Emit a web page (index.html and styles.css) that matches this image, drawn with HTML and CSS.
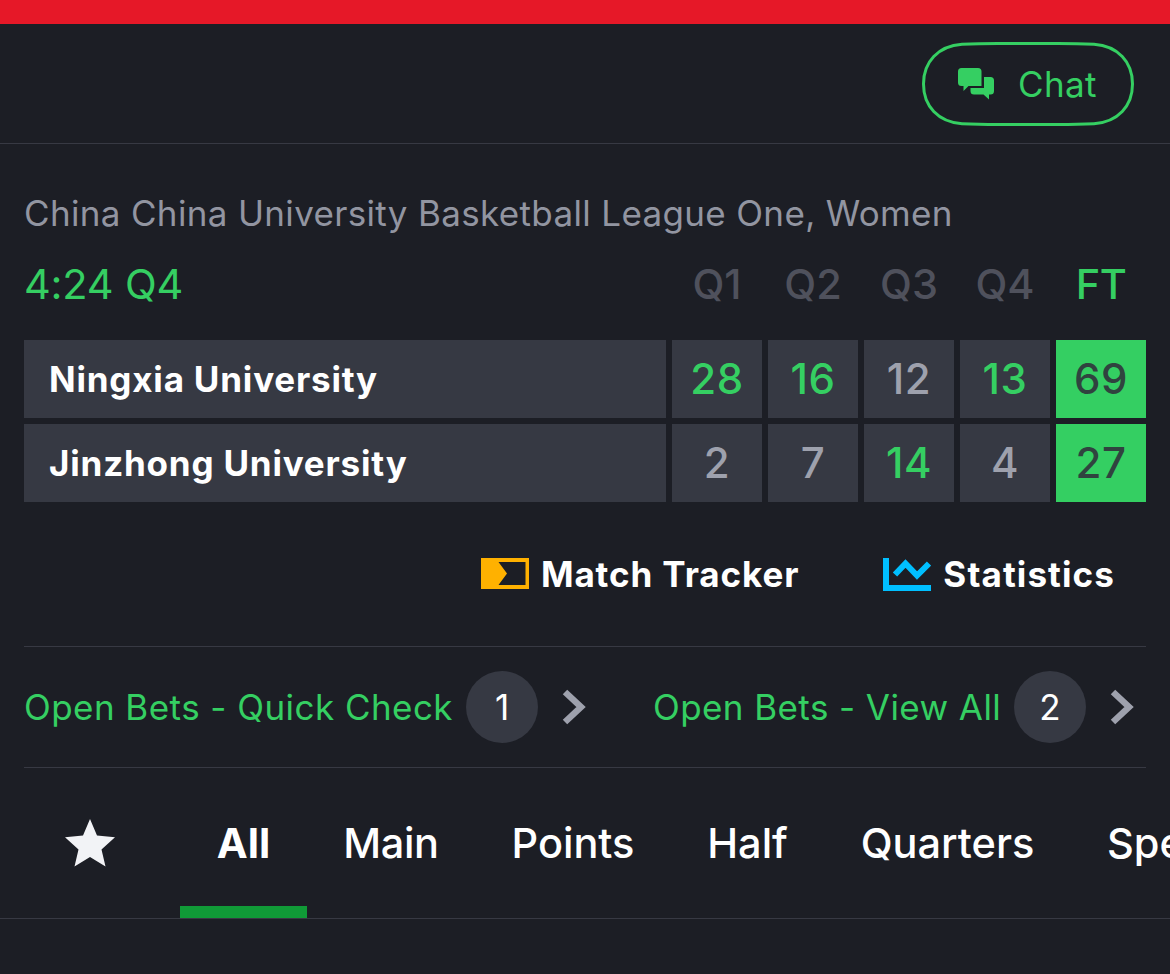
FILE: index.html
```html
<!DOCTYPE html>
<html lang="en">
<head>
<meta charset="utf-8">
<title>Match</title>
<link rel="stylesheet" href="styles.css">
</head>
<body>
<div class="alert-bar"></div>
<header class="header">
  <button class="chat">
    <svg class="chat-outline" viewBox="0 0 212 84"><path d="M1.500 42C1.500 20 16 4 40 2.300Q56 1.500 76 1.500H136Q156 1.500 172 2.300C196 4 210.500 20 210.500 42S196 80 172 81.700Q156 82.500 136 82.500H76Q56 82.500 40 81.700C16 80 1.500 64 1.500 42Z"/></svg>
    <svg class="chat-icon" viewBox="0 0 36 32"><path d="M3.500 0H20Q23.500 0 23.500 3.500V18H10.500L5.500 23V18H3.500Q0 18 0 14.500V3.500Q0 0 3.500 0Z"/><path d="M26 9H32.500Q36 9 36 12.500V23Q36 26.500 32.500 26.500H31V31.500L25.500 26.500H16Q12.500 26.500 12.500 23V20H26Z"/></svg>
    <span class="chat-label">Chat</span>
  </button>
</header>
<main>
  <section class="match">
    <div class="league"><span>China China University Basketball League One, Women</span></div>
    <div class="periods">
      <span class="clock">4:24 Q4</span>
      <span class="period">Q1</span><span class="period">Q2</span><span class="period">Q3</span><span class="period">Q4</span><span class="period total">FT</span>
    </div>
    <div class="board">
      <span class="team">Ningxia University</span>
      <span class="score won">28</span><span class="score won">16</span><span class="score">12</span><span class="score won">13</span><span class="score final">69</span>
      <span class="team second">Jinzhong University</span>
      <span class="score">2</span><span class="score">7</span><span class="score won">14</span><span class="score">4</span><span class="score final">27</span>
    </div>
    <div class="links">
      <a class="link tracker"><svg class="tracker-icon" viewBox="0 0 48 31"><path fill-rule="evenodd" d="M0 0H48V31H0ZM17.500 4L26 15.500L17.500 27H44.500V4Z"/></svg><span>Match Tracker</span></a>
      <a class="link stats"><svg class="stats-icon" viewBox="0 0 48 33"><path d="M3 0V30H48M12 16.500L22.500 5.500L34 17.500L46 5.500"/></svg><span>Statistics</span></a>
    </div>
  </section>
  <section class="bets">
    <a class="bet quick"><span class="bet-label">Open Bets - Quick Check</span><span class="count">1</span><svg class="chevron" viewBox="0 0 24 36"><path d="M3 3L19 18L3 33"/></svg></a>
    <a class="bet view"><span class="bet-label">Open Bets - View All</span><span class="count">2</span><svg class="chevron" viewBox="0 0 24 36"><path d="M3 3L19 18L3 33"/></svg></a>
  </section>
  <nav class="tabs">
    <a class="tab favourite"><svg class="star" viewBox="0 0 50 48"><path d="M25 0L32 16.500L50 18.200L36.500 30.500L40.500 47.500L25 38L9.500 47.500L13.500 30.500L0 18.200L18 16.500Z"/></svg></a>
    <a class="tab active">All</a>
    <a class="tab main-tab">Main</a>
    <a class="tab points">Points</a>
    <a class="tab half">Half</a>
    <a class="tab quarters">Quarters</a>
    <a class="tab specials">Specials</a>
  </nav>
</main>
</body>
</html>
```
FILE: styles.css
```css
* { box-sizing: border-box; }
body {
  margin: 0;
  height: 974px;
  overflow: hidden;
  background: #1c1e25;
  color: #fff;
  font-family: Inter, "Liberation Sans", sans-serif;
  font-size: 35px;
  white-space: nowrap;
}
svg { display: block; flex: none; }
.alert-bar { height: 24px; background: #e61828; }
.header {
  display: flex;
  justify-content: flex-end;
  height: 120px;
  padding: 18px 36px 0 0;
  border-bottom: 1px solid #373943;
}
.chat {
  position: relative;
  display: flex;
  align-items: center;
  width: 212px;
  height: 84px;
  padding: 0 0 0 36px;
  border: 0;
  background: none;
  color: #35cf62;
  font: inherit;
}
.chat-outline { position: absolute; inset: 0; fill: none; stroke: #35cf62; stroke-width: 3; }
.chat-icon { width: 36px; height: 32px; fill: #35cf62; }
.chat-label { margin-left: 24px; letter-spacing: .4px; }
.match { padding: 39px 24px 0; }
.league { height: 60px; line-height: 60px; color: #9295a1; letter-spacing: .34px; }
.periods, .board {
  display: grid;
  grid-template-columns: 642px repeat(5, 90px);
  gap: 6px;
  font-size: 41.500px;
}
.periods { height: 97px; line-height: 82px; }
.clock { color: #35cf62; letter-spacing: -.2px; }
.period { color: #4f515c; text-align: center; font-weight: 500; }
.period.total { color: #35cf62; letter-spacing: -.5px; }
.board { grid-auto-rows: 78px; line-height: 78px; }
.team { padding-left: 25px; background: #363943; font-size: 35px; font-weight: 700; letter-spacing: .8px; }
.score { background: #363943; color: #9ea1ad; font-size: 42px; text-align: center; font-weight: 500; letter-spacing: .6px; }
.score.won { color: #35cf62; }
.score.final { background: #34cf62; color: #30433f; }
.links {
  display: flex;
  justify-content: flex-end;
  gap: 84px;
  height: 144px;
  padding-right: 31px;
  font-weight: 700;
}
.link { display: flex; align-items: center; gap: 12px; }
.tracker { letter-spacing: .9px; }
.stats { letter-spacing: 1.1px; }
.tracker-icon { width: 48px; height: 31px; margin-top: -2px; fill: #ffb100; }
.stats-icon { width: 48px; height: 33px; fill: none; stroke: #00bfff; stroke-width: 6; }
.bets {
  display: flex;
  height: 122px;
  margin: 0 24px;
  border: solid #373943;
  border-width: 1px 0;
}
.bet { display: flex; align-items: center; color: #35cf62; }
.quick { width: 629px; }
.bet-label { width: 442px; letter-spacing: .45px; }
.view .bet-label { width: 361px; letter-spacing: .42px; }
.count {
  width: 72px;
  height: 72px;
  border-radius: 50%;
  background: #363943;
  color: #fff;
  line-height: 72px;
  text-align: center;
}
.chevron { width: 24px; height: 36px; margin-left: 24px; fill: none; stroke: #9ea1ad; stroke-width: 6.500; }
.tabs { display: flex; overflow: hidden; height: 151px; border-bottom: 1px solid #373943; font-size: 41.500px; }
.tab { display: flex; flex: none; align-items: center; justify-content: center; height: 150px; font-weight: 500; }
.favourite { width: 180px; }
.star { width: 50px; height: 48px; fill: #f2f3f6; }
.active { width: 127px; border-bottom: 12px solid #109a37; padding-top: 12px; font-weight: 700; }
.main-tab { width: 168px; letter-spacing: -.4px; }
.points { width: 196px; }
.half { width: 153px; }
.quarters { width: 247px; }
.specials { padding-left: 36px; }
```
